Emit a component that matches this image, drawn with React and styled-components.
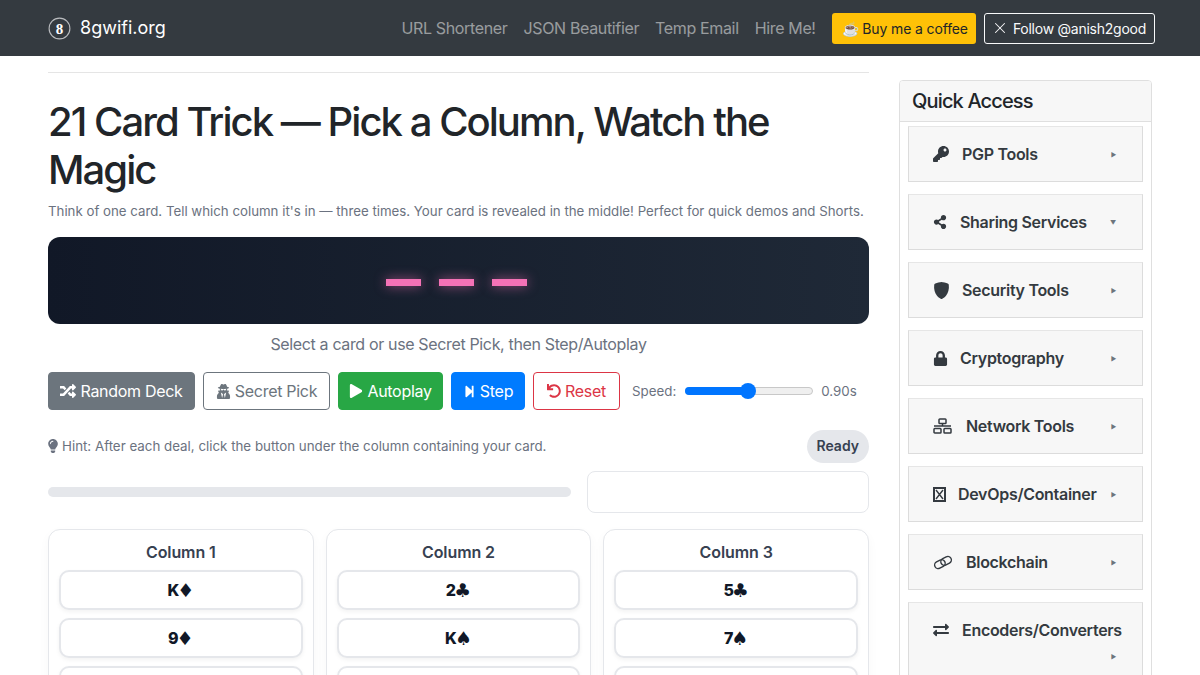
import React from 'react';
import styled, { createGlobalStyle } from 'styled-components';
import { X } from 'lucide-react';
import {
  FaKey, FaShareAlt, FaLock, FaExchangeAlt, FaRandom, FaUserSecret,
  FaPlay, FaStepForward, FaUndo, FaLightbulb,
} from 'react-icons/fa';
import { BsShieldFill } from 'react-icons/bs';

const GlobalStyle = createGlobalStyle`
  * { box-sizing: border-box; }
  html, body { margin: 0; padding: 0; background: #fff; overflow: hidden; }
  body { font-family: Inter, "Liberation Sans", sans-serif; color: #212529; }
`

const Nav = styled.nav`
  height: 56px;
  background: #343a40;
  display: flex;
  align-items: center;
  justify-content: space-between;
  padding: 0 45px 0 48px;
`

const Brand = styled.a`
  display: flex;
  align-items: center;
  gap: 9px;
  color: #fff;
  font-size: 18px;
  line-height: 1;
`

const NavRight = styled.div`
  display: flex;
  align-items: center;
`

const NavLink = styled.a`
  color: rgba(255, 255, 255, 0.5);
  font-size: 16px;
  letter-spacing: -0.35px;
  margin-right: 16px;
`

const CoffeeButton = styled.a`
  height: 31px;
  display: flex;
  align-items: center;
  gap: 5px;
  padding: 0 8px 0 10px;
  background: #ffc107;
  color: #212529;
  border-radius: 3px;
  font-size: 14px;
  letter-spacing: -0.13px;
`

const FollowButton = styled.a`
  height: 31px;
  display: flex;
  align-items: center;
  gap: 4px;
  margin-left: 8px;
  padding: 0 8px 0 6px;
  border: 1px solid #f8f9fa;
  color: #f8f9fa;
  border-radius: 3px;
  font-size: 14px;
  letter-spacing: -0.25px;
`

const Page = styled.div`
  display: flex;
  align-items: flex-start;
  gap: 30px;
  padding: 0 48px;
`

const Main = styled.main`
  width: 821px;
  flex: none;
`

const Rule = styled.hr`
  margin: 16px 0 25px;
  border: 0;
  border-top: 1px solid #e5e5e5;
`

const Title = styled.h1`
  margin: 0 0 8px;
  font-size: 40px;
  line-height: 48px;
  font-weight: 500;
  letter-spacing: -1.95px;
`

const Lead = styled.p`
  margin: 0 0 16px;
  font-size: 13.28px;
  line-height: 19px;
  color: #6b7280;
  white-space: nowrap;
`

const Stage = styled.div`
  height: 87px;
  padding-right: 5px;
  border-radius: 12px;
  background: linear-gradient(90deg, #111827, #1f2937);
  display: flex;
  align-items: center;
  justify-content: center;
  gap: 18px;
`

const Dash = styled.span`
  width: 35px;
  height: 7px;
  margin-top: 4px;
  background: #f472b6;
  box-shadow: 0 0 12px rgba(244, 114, 182, 0.6);
`

const Status = styled.div`
  margin: 10px 0 18px;
  text-align: center;
  font-size: 16px;
  line-height: 20px;
  letter-spacing: -0.35px;
  color: #6b7280;
`

const Controls = styled.div`
  height: 38px;
  display: flex;
  align-items: center;
  gap: 8px;
`

const Btn = styled.button`
  height: 38px;
  display: flex;
  align-items: center;
  justify-content: center;
  gap: 4px;
  padding: 0;
  width: ${p => p.$w}px;
  font: inherit;
  font-size: 16px;
  border-radius: 4px;
  border: 1px solid ${p => p.$border || p.$bg};
  background: ${p => p.$bg};
  color: ${p => p.$color};
  letter-spacing: -0.3px;
`

const SpeedLabel = styled.span`
  margin-left: 4px;
  font-size: 13.33px;
  color: #6b7280;
`

const SpeedValue = styled.span`
  font-size: 13.33px;
  color: #6b7280;
`

const Track = styled.div`
  width: 128px;
  height: 8px;
  margin-left: 1px;
  position: relative;
  border-radius: 4px;
  background: #efefef;
  border: 1px solid #c8c8c8;
`

const Fill = styled.div`
  position: absolute;
  left: -1px;
  top: -1px;
  bottom: -1px;
  border-radius: 4px;
  background: #0075ff;
`

const Thumb = styled.div`
  position: absolute;
  top: -5px;
  width: 16px;
  height: 16px;
  margin-left: -8px;
  border-radius: 50%;
  background: #0075ff;
`

const HintRow = styled.div`
  margin-top: 20px;
  height: 33px;
  display: flex;
  align-items: center;
  justify-content: space-between;
`

const Hint = styled.div`
  display: flex;
  align-items: center;
  padding-bottom: 2px;
  font-size: 13.33px;
  color: #6b7280;
`

const HintIcon = styled(FaLightbulb)`
  margin: 0 2px 0 -2px;
`

const Pill = styled.span`
  height: 33px;
  padding: 0 10px 2px;
  display: flex;
  align-items: center;
  border-radius: 999px;
  background: #e5e7eb;
  color: #374151;
  font-size: 14px;
  font-weight: 600;
`

const ProgressRow = styled.div`
  margin-top: 8px;
  display: flex;
  align-items: center;
  gap: 16px;
`

const Progress = styled.div`
  flex: 1;
  height: 10px;
  border-radius: 5px;
  background: #e5e7eb;
`

const ResultBox = styled.div`
  width: 282px;
  height: 42px;
  border: 1px solid #e5e7eb;
  border-radius: 8px;
`

const Columns = styled.div`
  margin-top: 16px;
  display: grid;
  grid-template-columns: repeat(3, 1fr);
  gap: 12px;
`

const Column = styled.section`
  padding: 12px 10px;
  border: 1px solid #e5e7eb;
  border-radius: 12px;
  background: #fff;
  box-shadow: 0 4px 12px rgba(0, 0, 0, 0.03);
`

const ColumnTitle = styled.div`
  height: 20px;
  margin-bottom: 8px;
  text-align: center;
  font-size: 16px;
  line-height: 21px;
  font-weight: 600;
  letter-spacing: -0.1px;
  color: #374151;
`

const Card = styled.div`
  height: 40px;
  margin-bottom: 8px;
  display: flex;
  align-items: center;
  justify-content: center;
  border: 2px solid #e5e7eb;
  border-radius: 10px;
  background: #fff;
  box-shadow: 0 2px 4px rgba(0, 0, 0, 0.05);
  color: #111827;
  font-size: 16px;
  font-weight: 800;
`

const Suit = styled.span`
  margin-left: -2px;
  font-family: "DejaVu Sans", sans-serif;
  font-size: 19px;
  line-height: 1;
`

const Sidebar = styled.aside`
  width: 253px;
  flex: none;
  margin-top: 24px;
  border: 1px solid #dfdfdf;
  border-radius: 4px;
  padding-bottom: 12px;
`

const SideHeader = styled.div`
  height: 41px;
  padding: 0 12px;
  display: flex;
  align-items: center;
  background: #f7f7f7;
  border-bottom: 1px solid #dfdfdf;
  border-radius: 3px 3px 0 0;
  font-size: 20px;
  font-weight: 500;
  letter-spacing: -0.85px;
`

const SideList = styled.div`
  padding: 4px 8px 0;
  display: flex;
  flex-direction: column;
  gap: 12px;
`

const SideItem = styled.div`
  min-height: ${p => (p.$tall ? 100 : 56)}px;
  padding: ${p => (p.$tall ? '17px' : '0')} 24px 0;
  display: flex;
  flex-wrap: wrap;
  align-content: ${p => (p.$tall ? 'flex-start' : 'center')};
  align-items: center;
  background: #f7f7f7;
  border: 1px solid #dcdcdc;
  border-top-color: #e6e6e6;
  color: #343a40;
  font-size: 16px;
  font-weight: 600;
  letter-spacing: -0.3px;
`

const SideLabel = styled.span`
  display: flex;
  align-items: center;
  white-space: nowrap;
  line-height: 20px;
`

const SideIcon = styled.span`
  width: ${p => p.$w}px;
  flex: none;
  display: flex;
  align-items: center;
`

const Caret = styled.span`
  margin-left: auto;
  margin-right: 2px;
  margin-top: 1px;
  color: #6c757d;
  font-size: 6px;
`

const TallCaret = styled(Caret)`
  width: 100%;
  margin-top: 13px;
  text-align: right;
`

const columns = [
  { title: 'Column 1', cards: [['K', '♦'], ['9', '♦'], ['', '']] },
  { title: 'Column 2', cards: [['2', '♣'], ['K', '♠'], ['', '']] },
  { title: 'Column 3', cards: [['5', '♣'], ['7', '♠'], ['', '']] },
]

const ContainerIcon = () => (
  <svg width="13" height="15" viewBox="0 0 13 15">
    <rect x="1" y="1" width="11" height="13" fill="none" stroke="#343a40" strokeWidth="2" />
    <path d="M3 3l7 9M10 3l-7 9" stroke="#343a40" strokeWidth="1.4" />
  </svg>
)

const NetworkIcon = () => (
  <svg width="19" height="16" viewBox="0 0 19 16" fill="none" stroke="#343a40" strokeWidth="1.5">
    <rect x="6" y="1" width="7" height="4.5" rx="0.8" />
    <rect x="1" y="10.5" width="7" height="4.5" rx="0.8" />
    <rect x="11" y="10.5" width="7" height="4.5" rx="0.8" />
    <path d="M9.5 5.5v2.5M1 8h17" />
  </svg>
)

const LinkIcon = () => (
  <svg width="20" height="15" viewBox="0 0 20 15" fill="none" stroke="#343a40" strokeWidth="1.4">
    <g transform="rotate(-28 10 7.5)">
      <rect x="1" y="4" width="11" height="7" rx="3.5" />
      <rect x="8" y="4" width="11" height="7" rx="3.5" />
    </g>
  </svg>
)

const tools = [
  { name: 'PGP Tools', icon: <FaKey size={16} />, w: 29 },
  { name: 'Sharing Services', icon: <FaShareAlt size={14} />, w: 27, open: true },
  { name: 'Security Tools', icon: <BsShieldFill size={17} />, w: 29 },
  { name: 'Cryptography', icon: <FaLock size={15} />, w: 27 },
  { name: 'Network Tools', icon: <NetworkIcon />, w: 33 },
  { name: 'DevOps/Container', icon: <ContainerIcon />, w: 25 },
  { name: 'Blockchain', icon: <LinkIcon />, w: 33 },
  { name: 'Encoders/Converters', icon: <FaExchangeAlt size={16} />, w: 29, tall: true },
]

const Logo = () => (
  <svg width="23" height="23" viewBox="0 0 23 23">
    <circle cx="11.5" cy="11.5" r="10.4" fill="none" stroke="#b9bbbe" strokeWidth="1.1" />
    <text x="11.5" y="16.5" textAnchor="middle" fontFamily="Liberation Serif, serif" fontWeight="700" fontSize="15" fill="#fff">8</text>
  </svg>
)

export default function App() {
  return (
    <>
      <GlobalStyle />
      <Nav>
        <Brand><Logo />8gwifi.org</Brand>
        <NavRight>
          <NavLink>URL Shortener</NavLink>
          <NavLink>JSON Beautifier</NavLink>
          <NavLink>Temp Email</NavLink>
          <NavLink>Hire Me!</NavLink>
          <CoffeeButton>☕ Buy me a coffee</CoffeeButton>
          <FollowButton><X size={18} strokeWidth={1.4} />Follow @anish2good</FollowButton>
        </NavRight>
      </Nav>
      <Page>
        <Main>
          <Rule />
          <Title>21 Card Trick — Pick a Column, Watch the Magic</Title>
          <Lead>Think of one card. Tell which column it's in — three times. Your card is revealed in the middle! Perfect for quick demos and Shorts.</Lead>
          <Stage><Dash /><Dash /><Dash /></Stage>
          <Status>Select a card or use Secret Pick, then Step/Autoplay</Status>
          <Controls>
            <Btn $w={147} $bg="#6c757d" $color="#fff"><FaRandom size={16} />Random Deck</Btn>
            <Btn $w={127} $bg="#fff" $border="#6c757d" $color="#6c757d"><FaUserSecret size={15} />Secret Pick</Btn>
            <Btn $w={105} $bg="#28a745" $color="#fff"><FaPlay size={14} />Autoplay</Btn>
            <Btn $w={74} $bg="#007bff" $color="#fff"><FaStepForward size={13} />Step</Btn>
            <Btn $w={87} $bg="#fff" $border="#dc3545" $color="#dc3545"><FaUndo size={14} />Reset</Btn>
            <SpeedLabel>Speed:</SpeedLabel>
            <Track>
              <Fill style={{ width: '49%' }} />
              <Thumb style={{ left: '49%' }} />
            </Track>
            <SpeedValue>0.90s</SpeedValue>
          </Controls>
          <HintRow>
            <Hint><HintIcon size={14} />Hint: After each deal, click the button under the column containing your card.</Hint>
            <Pill>Ready</Pill>
          </HintRow>
          <ProgressRow>
            <Progress />
            <ResultBox />
          </ProgressRow>
          <Columns>
            {columns.map(col => (
              <Column key={col.title}>
                <ColumnTitle>{col.title}</ColumnTitle>
                {col.cards.map(([rank, suit], index) => (
                  <Card key={index}>{rank}<Suit>{suit}</Suit></Card>
                ))}
              </Column>
            ))}
          </Columns>
        </Main>
        <Sidebar>
          <SideHeader>Quick Access</SideHeader>
          <SideList>
            {tools.map(tool => (
              <SideItem key={tool.name} $tall={tool.tall}>
                <SideLabel>
                  <SideIcon $w={tool.w}>{tool.icon}</SideIcon>
                  {tool.name}
                </SideLabel>
                {tool.tall
                  ? <TallCaret>▶</TallCaret>
                  : <Caret>{tool.open ? '▼' : '▶'}</Caret>}
              </SideItem>
            ))}
          </SideList>
        </Sidebar>
      </Page>
    </>
  );
}
